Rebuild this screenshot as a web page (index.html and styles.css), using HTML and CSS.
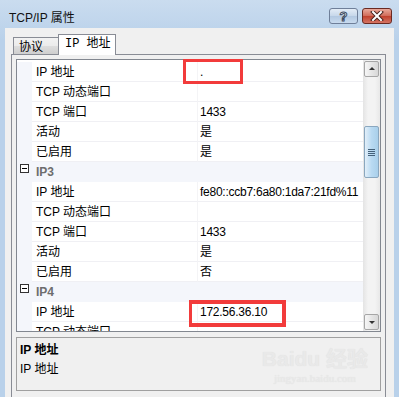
FILE: index.html
```html
<!doctype html>
<html lang="zh-CN">
  <head>
    <meta charset="UTF-8" />
    <title>TCP/IP 属性</title>
    <link rel="stylesheet" href="styles.css">
  </head>
  <body>
    <div class="window">
      <div class="titlebar">
        <span class="title">TCP/IP 属性</span>
        <div class="caption-buttons">
          <span class="cap help">?</span>
          <span class="cap close">
            <svg width="14" height="10" viewBox="0 0 14 10">
              <path d="M3 1 L11 9 M11 1 L3 9" stroke="#4a2520" stroke-width="4" stroke-linecap="square"/>
              <path d="M3 1 L11 9 M11 1 L3 9" stroke="#fff" stroke-width="2" stroke-linecap="square"/>
            </svg>
          </span>
        </div>
      </div>

      <div class="client">
        <div class="tabs">
          <span class="tab">协议</span>
          <span class="tab active">IP 地址</span>
        </div>

        <div class="panel">
          <div class="grid">
            <div class="rows">
              <div class="row first"><span class="gutter"></span><span class="name">IP 地址</span><span class="value">.</span></div>
              <div class="row"><span class="gutter"></span><span class="name">TCP 动态端口</span><span class="value"></span></div>
              <div class="row"><span class="gutter"></span><span class="name">TCP 端口</span><span class="value">1433</span></div>
              <div class="row"><span class="gutter"></span><span class="name">活动</span><span class="value">是</span></div>
              <div class="row"><span class="gutter"></span><span class="name">已启用</span><span class="value">是</span></div>
              <div class="category"><span class="gutter"><span class="toggle"></span></span><span class="cat-name">IP3</span></div>
              <div class="row"><span class="gutter"></span><span class="name">IP 地址</span><span class="value">fe80::ccb7:6a80:1da7:21fd%11</span></div>
              <div class="row"><span class="gutter"></span><span class="name">TCP 动态端口</span><span class="value"></span></div>
              <div class="row"><span class="gutter"></span><span class="name">TCP 端口</span><span class="value">1433</span></div>
              <div class="row"><span class="gutter"></span><span class="name">活动</span><span class="value">是</span></div>
              <div class="row"><span class="gutter"></span><span class="name">已启用</span><span class="value">否</span></div>
              <div class="category"><span class="gutter"><span class="toggle"></span></span><span class="cat-name">IP4</span></div>
              <div class="row"><span class="gutter"></span><span class="name">IP 地址</span><span class="value">172.56.36.10</span></div>
              <div class="row"><span class="gutter"></span><span class="name">TCP 动态端口</span><span class="value"></span></div>
            </div>
            <div class="scrollbar">
              <span class="sb-btn up"></span>
              <div class="sb-track">
                <span class="sb-thumb"><span class="grip"></span></span>
              </div>
              <span class="sb-btn down"></span>
            </div>
          </div>

          <div class="desc">
            <div class="desc-title">IP 地址</div>
            <div class="desc-text">IP 地址</div>
            <div class="watermark">
              <span class="wm-logo">Bai<b>du</b> 经验</span>
              <span class="wm-url">jingyan.baidu.com</span>
            </div>
          </div>

          <span class="mark mark-top"></span>
          <span class="mark mark-ip4"></span>
        </div>
      </div>
    </div>
  </body>
</html>
```

FILE: styles.css
```css
body {
  margin: 0;
  font-family: "Liberation Sans", "Noto Sans CJK SC", sans-serif;
  font-size: 12px;
  color: #000;
}
.window {
  width: 399px;
  height: 397px;
  overflow: hidden;
  background: linear-gradient(#cadcef, #b9d1ea 40px);
  display: flex;
  flex-direction: column;
}
.titlebar {
  height: 28px;
  flex: none;
  display: flex;
  align-items: flex-start;
  justify-content: space-between;
  padding: 0 7px 0 9px;
}
.title {
  margin-top: 8px;
  font-size: 12px;
  color: #111;
}
.caption-buttons {
  display: flex;
  gap: 4px;
  margin-top: 8px;
}
.cap {
  width: 29px;
  height: 16px;
  box-sizing: border-box;
  border-radius: 3px;
  display: flex;
  align-items: center;
  justify-content: center;
}
.help {
  border: 1px solid #6f7f99;
  background: linear-gradient(#e3ecf6, #c6d7ea 50%, #b2c8e1 51%, #c9dbef);
  color: #fff;
  font-weight: bold;
  font-size: 13px;
  -webkit-text-stroke: 1px #3a4a60;
  font-family: "Liberation Sans", sans-serif;
}
.close {
  width: 30px;
  border: 1px solid #6a2a22;
  background: linear-gradient(#e9a99b, #d06a58 50%, #c0402c 51%, #d47464);
}
.client {
  flex: 1;
  margin: 0 5px;
  background: #f0f0f0;
  padding-top: 6px;
}
.tabs {
  display: flex;
  align-items: flex-end;
  padding-left: 8px;
  height: 20px;
  position: relative;
  z-index: 1;
}
.tab {
  height: 17px;
  box-sizing: border-box;
  width: 46px;
  border: 1px solid #898c95;
  border-bottom: none;
  background: linear-gradient(#f2f2f2, #ebebeb 50%, #dddddd 51%, #cfcfcf);
  padding: 2px 0 0 5px;
  line-height: 15px;
  font-size: 12px;
}
.tab.active {
  height: 21px;
  width: 58px;
  margin-left: -1px;
  margin-bottom: -1px;
  background: #fff;
  padding: 2px 0 0 6px;
  font-family: "Liberation Mono", "Noto Sans CJK SC", monospace;
}
.panel {
  position: relative;
  margin-left: 6px;
  width: 375px;
  height: 360px;
  box-sizing: border-box;
  border: 1px solid #898c95;
  padding: 4px 4px 0;
  background: #f0f0f0;
}
.grid {
  height: 273px;
  box-sizing: border-box;
  border: 1px solid #828790;
  background: #fff;
  display: flex;
  overflow: hidden;
}
.rows {
  flex: 1;
  padding-top: 2px;
}
.row,
.category {
  display: flex;
  height: 20px;
}
.gutter {
  width: 15px;
  flex: none;
  background: #f4f6fb;
}
.name,
.value {
  box-sizing: border-box;
  border-bottom: 1px solid #f0f0f4;
  padding-top: 1px;
  line-height: 18px;
}
.name {
  width: 166px;
  padding-left: 4px;
  border-right: 1px solid #f4f4f6;
}
.value {
  flex: 1;
  padding-left: 2px;
  letter-spacing: -0.25px;
  white-space: nowrap;
}
.category {
  background: #f4f6fb;
}
.category .gutter {
  position: relative;
}
.toggle {
  position: absolute;
  left: 3px;
  top: 2px;
  width: 9px;
  height: 9px;
  box-sizing: border-box;
  border: 1px solid #333;
  background: #fff;
}
.toggle::after {
  content: "";
  position: absolute;
  left: 1px;
  top: 3px;
  width: 5px;
  height: 1px;
  background: #000;
}
.cat-name {
  padding: 1px 0 0 4px;
  line-height: 18px;
  font-weight: bold;
  color: #6d6d6d;
}
.scrollbar {
  width: 17px;
  flex: none;
  display: flex;
  flex-direction: column;
  align-items: center;
  background: linear-gradient(90deg, #e4e4e4, #f3f3f3 30%, #f3f3f3 70%, #e8e8e8);
  padding: 1px 0;
  box-sizing: border-box;
}
.sb-btn {
  width: 15px;
  height: 16px;
  flex: none;
  box-sizing: border-box;
  border: 1px solid #a6a6a6;
  border-radius: 2px;
  background: linear-gradient(90deg, #f6f6f6, #e6e6e6 50%, #d8d8d8);
  position: relative;
}
.sb-btn::after {
  content: "";
  position: absolute;
  left: 4px;
  border-left: 3px solid transparent;
  border-right: 3px solid transparent;
}
.up::after {
  top: 5px;
  border-bottom: 3px solid #333;
}
.down::after {
  top: 6px;
  border-top: 3px solid #333;
}
.sb-track {
  flex: 1;
  padding-top: 49px;
  display: flex;
  justify-content: center;
}
.sb-thumb {
  width: 15px;
  height: 52px;
  box-sizing: border-box;
  border: 1px solid #8aa7bf;
  border-radius: 2px;
  background: linear-gradient(90deg, #e2eff9, #b9daf2 50%, #a9cfea);
  display: flex;
  align-items: center;
  justify-content: center;
}
.grip {
  width: 7px;
  height: 7px;
  background: repeating-linear-gradient(#44617a 0 1px, transparent 1px 2px);
}
.desc {
  position: relative;
  margin-top: 5px;
  height: 54px;
  box-sizing: border-box;
  border: 1px solid #a0a0a0;
  padding: 5px 3px;
  overflow: hidden;
}
.desc-title {
  font-weight: bold;
  line-height: 14px;
}
.desc-text {
  margin-top: 5px;
  line-height: 14px;
}
.watermark {
  position: absolute;
  right: 12px;
  top: 8px;
  display: flex;
  flex-direction: column;
  align-items: center;
  color: #e9e9e9;
  text-shadow: 0 0 1px #dcdcdc;
}
.wm-logo {
  font-size: 21px;
  font-weight: bold;
  line-height: 26px;
}
.wm-url {
  font-family: "Liberation Serif", serif;
  font-size: 11px;
  line-height: 12px;
}
.mark {
  position: absolute;
  box-sizing: border-box;
  border: 3px solid #f23b3b;
}
.mark-top {
  left: 171px;
  top: 4px;
  width: 60px;
  height: 25px;
}
.mark-ip4 {
  left: 177px;
  top: 245px;
  width: 97px;
  height: 27px;
  border-width: 4px 4px 4px 3px;
}
```
